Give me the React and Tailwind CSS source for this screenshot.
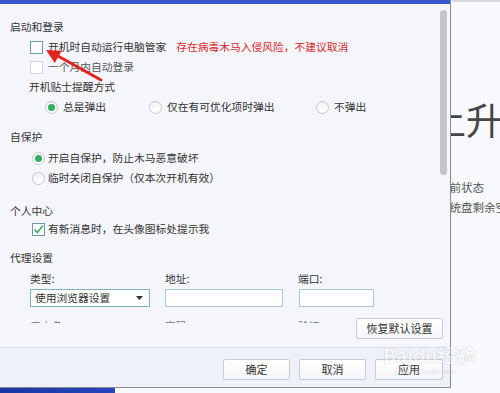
import React from "react";

const font = "font-['Noto_Sans_CJK_SC','Noto_Sans',sans-serif]";

function Check({ checked, disabled }) {
  return (
    <span
      className={`flex h-[13px] w-[13px] shrink-0 items-center justify-center border bg-white ${
        disabled ? "border-[#cfd2d8] bg-[#f3f4f7]" : "border-[#6f9aa6]"
      }`}
    >
      {checked && (
        <svg width="11" height="11" viewBox="0 0 11 11">
          <path d="M1.5 5.5 L4.3 8.5 L9.8 1.8" fill="none" stroke="#3aa35a" strokeWidth="1.6" />
        </svg>
      )}
    </span>
  );
}

function Radio({ on }) {
  return (
    <span className="flex h-[13px] w-[13px] shrink-0 items-center justify-center rounded-full border border-[#c6c8cc] bg-[linear-gradient(#f2f2f2,#ffffff)]">
      {on && <span className="h-[7px] w-[7px] rounded-full bg-[#2fae62]" />}
    </span>
  );
}

function Btn({ children, w }) {
  return (
    <button className={`h-[21px] ${w} rounded-[2px] border border-[#c8cbd2] bg-[linear-gradient(#ffffff,#f4f5f8)] text-[11px] text-[#333]`}>
      {children}
    </button>
  );
}

export default function App() {
  return (
    <div className={`relative h-[393px] w-[500px] overflow-hidden bg-[#f8f9fc] ${font} text-[10.75px] text-[#333]`}>
      {/* app behind the dialog */}
      <div className="absolute left-[452px] top-0 h-[2px] w-[48px] bg-[#d9dadd]" />
      <div className="absolute left-[429px] top-[99px] whitespace-nowrap text-[37px] leading-[40px] text-[#454545]">上升级</div>
      <div className="absolute left-[438px] top-[177px] whitespace-nowrap text-[11.5px] leading-[20px] text-[#555]">当前状态</div>
      <div className="absolute left-[438px] top-[197px] whitespace-nowrap text-[11.5px] leading-[20px] text-[#555]">系统盘剩余空间</div>

      {/* dialog */}
      <div className="absolute left-0 top-0 flex h-[388px] w-[451px] flex-col border-b border-r border-[#858a96] bg-[#f5f6fc]">
        <div className="h-[4px] bg-[#3556cc]" />
        <div className="relative flex h-[343px] flex-col">
          <div className="h-[319px] overflow-hidden pl-[10px]">
            <div className="mt-[13px] flex h-[20px] items-center leading-[20px]">启动和登录</div>
            <div className="flex h-[20px] items-center pl-[20px] leading-[20px]">
              <Check />
              <span className="ml-[5px]">开机时自动运行电脑管家</span>
              <span className="ml-[10px] text-[#d8262a]">存在病毒木马入侵风险，不建议取消</span>
            </div>
            <div className="flex h-[20px] items-center pl-[20px] leading-[20px]">
              <Check disabled />
              <span className="ml-[5px] text-[#555]">一个月内自动登录</span>
            </div>
            <div className="flex h-[20px] items-center pl-[19px] leading-[20px]">开机贴士提醒方式</div>
            <div className="flex h-[20px] items-center pl-[35px] leading-[20px]">
              <div className="flex w-[104px] items-center">
                <Radio on />
                <span className="ml-[5px]">总是弹出</span>
              </div>
              <div className="flex w-[167px] items-center">
                <Radio />
                <span className="ml-[5px]">仅在有可优化项时弹出</span>
              </div>
              <div className="flex items-center">
                <Radio />
                <span className="ml-[5px]">不弹出</span>
              </div>
            </div>

            <div className="mt-[10px] flex h-[20px] items-center leading-[20px]">自保护</div>
            <div className="mt-[1px] flex h-[20px] items-center pl-[22px] leading-[20px]">
              <Radio on />
              <span className="ml-[3px]">开启自保护，防止木马恶意破坏</span>
            </div>
            <div className="flex h-[20px] items-center pl-[22px] leading-[20px]">
              <Radio />
              <span className="ml-[3px]">临时关闭自保护（仅本次开机有效）</span>
            </div>

            <div className="mt-[13px] flex h-[20px] items-center leading-[20px]">个人中心</div>
            <div className="flex h-[16px] items-center pl-[22px] leading-[16px]">
              <Check checked />
              <span className="ml-[3px]">有新消息时，在头像图标处提示我</span>
            </div>

            <div className="mt-[11px] flex h-[20px] items-center leading-[20px]">代理设置</div>
            <div className="mt-[1px] flex h-[20px] items-center pl-[20px] leading-[20px]">
              <span className="w-[135px]">类型:</span>
              <span className="w-[133px]">地址:</span>
              <span>端口:</span>
            </div>
            <div className="flex h-[18px] items-center pl-[20px]">
              <div className="flex h-[18px] w-[120px] items-center justify-between border border-[#7fb0bf] bg-white pl-[4px] pr-[6px]">
                <span className="leading-[16px]">使用浏览器设置</span>
                <svg width="7" height="4" viewBox="0 0 7 4">
                  <path d="M0 0 H7 L3.5 4 Z" fill="#333" />
                </svg>
              </div>
              <div className="ml-[15px] h-[18px] w-[118px] border border-[#a9c8d6] bg-white" />
              <div className="ml-[16px] h-[18px] w-[75px] border border-[#a9c8d6] bg-white" />
            </div>
            <div className="mt-[9px] flex h-[20px] items-center pl-[20px] leading-[20px] text-[#777]">
              <span className="w-[135px]">用户名:</span>
              <span className="w-[133px]">密码:</span>
              <span>验证:</span>
            </div>
          </div>
          <div className="-mt-[5px] flex justify-end pr-[7px]">
            <Btn w="w-[87px]">恢复默认设置</Btn>
          </div>
          <div className="absolute right-[3px] top-[6px] h-[165px] w-[7px] rounded-full bg-[#c4c5cb]" />
        </div>
        <div className="flex h-[40px] justify-end gap-[9px] border-t border-[#dcdfe7] bg-[#eef1f8] pr-[7px] pt-[11px]">
          <Btn w="w-[67px]">确定</Btn>
          <Btn w="w-[67px]">取消</Btn>
          <Btn w="w-[68px]">应用</Btn>
        </div>
      </div>

      {/* taskbar strip */}
      <div className="absolute bottom-0 left-0 h-[5px] w-[115px] bg-[linear-gradient(90deg,#1a36a4,#2646bf)]" />

      {/* red annotation arrow */}
      <svg className="absolute left-0 top-0" width="500" height="393" viewBox="0 0 500 393">
        <line x1="101" y1="80" x2="57" y2="55.5" stroke="#e3241b" strokeWidth="3" strokeLinecap="round" />
        <polygon points="46,50 61.6,50.7 54.8,62.9" fill="#e3241b" />
      </svg>

      {/* watermark */}
      <div className="pointer-events-none absolute left-[383px] top-[343px] flex flex-col items-start opacity-40">
        <span className="whitespace-nowrap text-[19px] font-bold leading-[24px] text-white [text-shadow:0_0_1px_#8a8a8a,0_0_1px_#8a8a8a]">Baidu经验</span>
        <span className="whitespace-nowrap pl-[12px] text-[7px] leading-[9px] text-[#bbb]">jingyan.baidu.com</span>
      </div>
    </div>
  );
}
